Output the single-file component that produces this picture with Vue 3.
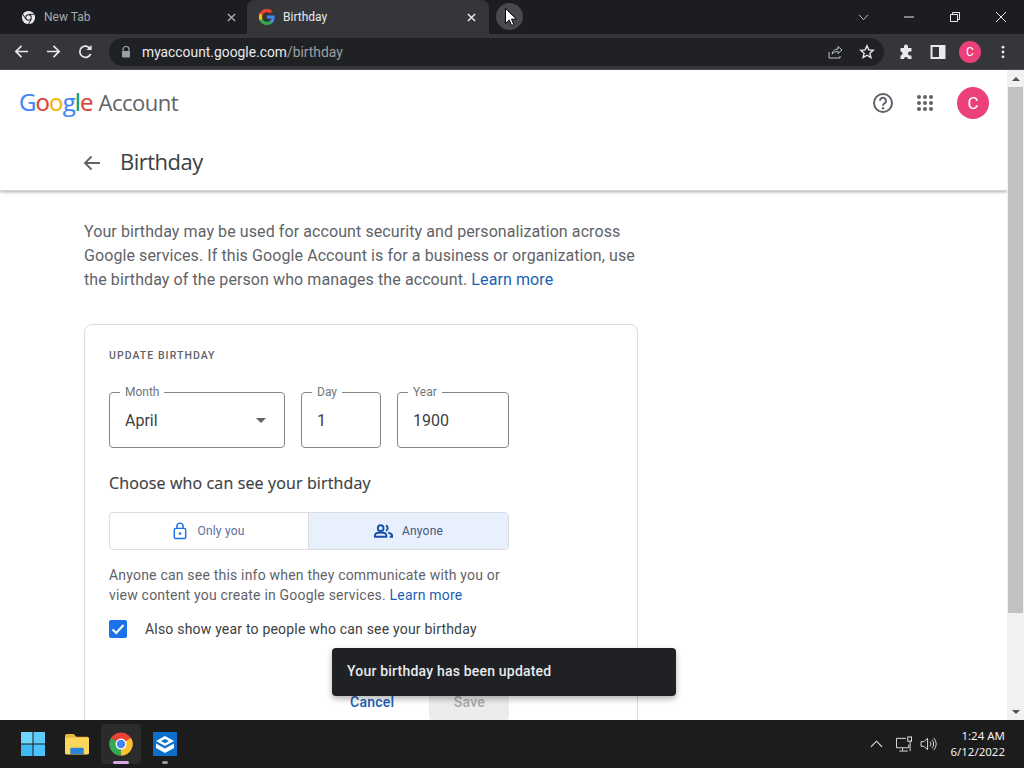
<script setup>
const tabs = [
  { title: 'New Tab', active: false },
  { title: 'Birthday', active: true }
]
const logo = [
  ['G', '#4285f4'], ['o', '#db4437'], ['o', '#f4b400'], ['g', '#4285f4'], ['l', '#0f9d58'], ['e', '#db4437']
]
</script>

<template>
  <div class="screen">
    <div class="tabstrip">
      <div v-for="t in tabs" :key="t.title" class="tab" :class="{ active: t.active }">
        <svg v-if="!t.active" class="fav" viewBox="0 0 16 16">
          <circle cx="8" cy="8" r="7" fill="#e8eaed" />
          <circle cx="8" cy="8" r="3.4" fill="#1c1d22" />
          <circle cx="8" cy="8" r="2.4" fill="#e8eaed" />
          <path d="M8 4.6h6M5 9.8 2 4.4M11 9.8l-3 5.2" stroke="#1c1d22" stroke-width="1" />
        </svg>
        <svg v-else class="fav" viewBox="0 0 16 16">
          <path d="M15.7 8.2c0-.6 0-1.100-.1-1.600H8v3h4.400a3.700 3.700 0 0 1-1.600 2.400v2h2.600c1.500-1.400 2.300-3.400 2.300-5.800z" fill="#4285f4" />
          <path d="M8 16c2.200 0 4-.7 5.400-2l-2.600-2c-.7.500-1.700.8-2.800.8-2.100 0-3.900-1.400-4.600-3.400H.7v2.100A8 8 0 0 0 8 16z" fill="#34a853" />
          <path d="M3.400 9.400a4.800 4.800 0 0 1 0-3V4.300H.7a8 8 0 0 0 0 7.200z" fill="#fbbc05" />
          <path d="M8 3.200c1.200 0 2.300.4 3.100 1.200l2.300-2.300A8 8 0 0 0 .7 4.300l2.700 2.100C4.100 4.500 5.900 3.200 8 3.200z" fill="#ea4335" />
        </svg>
        <span class="tab-title">{{ t.title }}</span>
        <svg class="tab-x" viewBox="0 0 10 10"><path d="M1 1l8 8M9 1 1 9" stroke="currentColor" stroke-width="1.600" /></svg>
      </div>
      <div class="newtab"><svg class="plus" viewBox="0 0 10 10"><path d="M5 1v8M1 5h8" stroke="#e8eaed" stroke-width="1.400" /></svg></div>
      <div class="winctrls">
        <svg class="chev" viewBox="0 0 12 8"><path d="M1 1l5 5.500L11 1" fill="none" stroke="#d0d2d6" stroke-width="1" /></svg>
        <svg class="wbtn" viewBox="0 0 12 12"><path d="M1 6h10" stroke="#e8eaed" stroke-width="1" /></svg>
        <svg class="wbtn" viewBox="0 0 12 12"><path d="M1.500 3.500h7v7h-7zM3.500 3.500v-2h7v7h-2" fill="none" stroke="#e8eaed" stroke-width="1" /></svg>
        <svg class="wbtn" viewBox="0 0 12 12"><path d="M1 1l10 10M11 1 1 11" stroke="#e8eaed" stroke-width="1" /></svg>
      </div>
    </div>

    <div class="toolbar">
      <svg class="tb" viewBox="0 0 16 16"><path d="M15 8H2M8 2 2 8l6 6" fill="none" stroke="#e8eaed" stroke-width="1.800" /></svg>
      <svg class="tb" viewBox="0 0 16 16"><path d="M1 8h13M8 2l6 6-6 6" fill="none" stroke="#e8eaed" stroke-width="1.800" /></svg>
      <svg class="tb" viewBox="0 0 16 16"><path d="M13.500 10.500A6 6 0 1 1 13 5" fill="none" stroke="#e8eaed" stroke-width="1.800" /><path d="M14.500 1v5.500H9z" fill="#e8eaed" /></svg>
      <div class="omnibox">
        <svg class="lock" viewBox="0 0 10 12"><path d="M2 5V3.500a3 3 0 0 1 6 0V5" fill="none" stroke="#9aa0a6" stroke-width="1.200" /><rect x="1" y="5" width="8" height="6.500" rx="1" fill="#9aa0a6" /></svg>
        <span class="url">myaccount.google.com<span class="url-dim">/birthday</span></span>
        <svg class="omni-ic share" viewBox="0 0 16 16"><path d="M2 8v6h11v-2M5 10c.5-3 3-5 6-5V2.500L15 6l-4 3.500V7.500c-2.500 0-4.500 1-6 2.500z" fill="none" stroke="#bdc1c6" stroke-width="1" /></svg>
        <svg class="omni-ic" viewBox="0 0 16 16"><path d="M8 1.800l1.800 4.100 4.400.4-3.300 2.900 1 4.300L8 11.200l-3.900 2.300 1-4.300-3.300-2.900 4.400-.4z" fill="none" stroke="#e8eaed" stroke-width="1.400" /></svg>
      </div>
      <svg class="tb2" viewBox="0 0 16 16"><path d="M6 2.500a2 2 0 0 1 4 0V4h3.500v3.500H12a2 2 0 0 0 0 4h1.500V15h-3.500a2 2 0 0 0-4 0H2.500v-3.500a2 2 0 0 0 0-4V4H6z" fill="#e8eaed" /></svg>
      <svg class="tb2" viewBox="0 0 16 16"><rect x="1.500" y="2" width="13" height="12" fill="none" stroke="#e8eaed" stroke-width="2" /><rect x="9" y="2" width="5.500" height="12" fill="#e8eaed" /></svg>
      <div class="mini-avatar">C</div>
      <svg class="tb3" viewBox="0 0 4 16"><circle cx="2" cy="2.500" r="1.600" fill="#e8eaed" /><circle cx="2" cy="8" r="1.600" fill="#e8eaed" /><circle cx="2" cy="13.500" r="1.600" fill="#e8eaed" /></svg>
    </div>

    <div class="viewport">
      <div class="page">
        <header class="header">
          <div class="topbar">
            <div class="brand">
              <span class="logo"><span v-for="(l, i) in logo" :key="i" :style="{ color: l[1] }">{{ l[0] }}</span></span>
              <span class="brand-word">Account</span>
            </div>
            <div class="top-actions">
              <svg class="help" viewBox="0 0 24 24"><circle cx="12" cy="12" r="9" fill="none" stroke="#5f6368" stroke-width="2" /><path d="M9 9.800a3 3 0 1 1 4.600 2.500c-1 .7-1.600 1.200-1.600 2.400" fill="none" stroke="#5f6368" stroke-width="2" /><circle cx="12" cy="17.300" r="1.200" fill="#5f6368" /></svg>
              <svg class="apps" viewBox="0 0 16 16">
                <g fill="#5f6368">
                  <circle cx="2" cy="2" r="2" /><circle cx="8" cy="2" r="2" /><circle cx="14" cy="2" r="2" />
                  <circle cx="2" cy="8" r="2" /><circle cx="8" cy="8" r="2" /><circle cx="14" cy="8" r="2" />
                  <circle cx="2" cy="14" r="2" /><circle cx="8" cy="14" r="2" /><circle cx="14" cy="14" r="2" />
                </g>
              </svg>
              <div class="avatar">C</div>
            </div>
          </div>
          <div class="titlebar">
            <svg class="back" viewBox="0 0 18 16"><path d="M17 8H2M8.500 1.500 2 8l6.500 6.500" fill="none" stroke="#5f6368" stroke-width="1.800" /></svg>
            <h1 class="title">Birthday</h1>
          </div>
        </header>

        <main class="content">
          <p class="intro">Your birthday may be used for account security and personalization across Google services. If this Google Account is for a business or organization, use the birthday of the person who manages the account. <a class="link">Learn more</a></p>

          <section class="card">
            <div class="card-label">UPDATE BIRTHDAY</div>
            <div class="fields">
              <div class="field f-month"><span class="legend">Month</span><span class="value">April</span><span class="caret"></span></div>
              <div class="field f-day"><span class="legend">Day</span><span class="value">1</span></div>
              <div class="field f-year"><span class="legend">Year</span><span class="value">1900</span></div>
            </div>
            <h2 class="choose">Choose who can see your birthday</h2>
            <div class="toggle">
              <div class="seg off">
                <svg class="seg-ic" viewBox="0 0 16 20"><path d="M4.500 7V4.500a3.500 3.500 0 0 1 7 0V7" fill="none" stroke="#1a73e8" stroke-width="1.700" /><rect x="1.500" y="7" width="13" height="11.500" rx="1.500" fill="none" stroke="#1a73e8" stroke-width="1.700" /><circle cx="8" cy="12.800" r="1.500" fill="#1a73e8" /></svg>
                <span>Only you</span>
              </div>
              <div class="seg on">
                <svg class="seg-ic wide" viewBox="0 0 20 14"><circle cx="7" cy="4" r="3" fill="none" stroke="#174ea6" stroke-width="2" /><path d="M1 13v-1.500C1 9.500 4 8.500 7 8.500s6 1 6 3V13z" fill="none" stroke="#174ea6" stroke-width="2" /><path d="M12.500 1.200a3 3 0 0 1 0 5.600M15 8.800c2 .6 4 1.400 4 3V13h-2.500" fill="none" stroke="#174ea6" stroke-width="2" /></svg>
                <span>Anyone</span>
              </div>
            </div>
            <p class="note">Anyone can see this info when they communicate with you or view content you create in Google services. <a class="link">Learn more</a></p>
            <div class="check-row">
              <svg class="check" viewBox="0 0 18 18"><rect width="18" height="18" rx="2" fill="#1a73e8" /><path d="M3.500 9.500l3.700 3.500 7.300-8" fill="none" stroke="#fff" stroke-width="2" /></svg>
              <span>Also show year to people who can see your birthday</span>
            </div>
            <div class="actions">
              <span class="cancel">Cancel</span>
              <span class="save">Save</span>
            </div>
          </section>
        </main>
      </div>
      <div class="scrollbar">
        <div class="sb-btn"><span class="up"></span></div>
        <div class="sb-thumb"></div>
        <div class="sb-track"></div>
        <div class="sb-btn"><span class="down"></span></div>
      </div>
      <div class="toast">Your birthday has been updated</div>
    </div>

    <footer class="taskbar">
      <div class="task-left">
        <div class="task-item">
          <svg class="start" viewBox="0 0 24 24"><g fill="#4cc2ff"><rect x="0" y="0" width="11.500" height="11.500" fill="#6fd6fb" /><rect x="12.500" y="0" width="11.500" height="11.500" fill="#5ccdf8" /><rect x="0" y="12.500" width="11.500" height="11.500" fill="#3fb9f2" /><rect x="12.500" y="12.500" width="11.500" height="11.500" /></g></svg>
        </div>
        <div class="task-item">
          <svg class="tico" viewBox="0 0 25 22"><path d="M0 2.500A2 2 0 0 1 2 .5h7l3 3h11a2 2 0 0 1 2 2v14a2 2 0 0 1-2 2H2a2 2 0 0 1-2-2z" fill="#e7b93c" /><rect x="0" y="4.500" width="25" height="17.500" rx="1.500" fill="#fbd75c" /><path d="M5.500 21.500v-5a1.500 1.500 0 0 1 1.500-1.500h11a1.500 1.500 0 0 1 1.500 1.500v5z" fill="#2a84d8" /></svg>
        </div>
        <div class="task-item chrome-item">
          <svg class="tico" viewBox="0 0 24 24">
            <circle cx="12" cy="12" r="11.500" fill="#ea4335" />
            <path d="M12 12 22 6a11.500 11.500 0 0 1-10 17.500z" fill="#fbc02d" />
            <path d="M12 12 12 23.500A11.500 11.500 0 0 1 2 6z" fill="#34a853" />
            <circle cx="12" cy="12" r="5.500" fill="#fff" />
            <circle cx="12" cy="12" r="4.200" fill="#4285f4" />
          </svg>
          <span class="run pink"></span>
        </div>
        <div class="task-item">
          <svg class="tico box" viewBox="0 0 24 24"><rect width="24" height="24" fill="#0a6fc8" /><path d="M12 4 21 9l-9 5-9-5z" fill="#fff" /><path d="M12 7 16 9l-4 2.200L8 9z" fill="#0a6fc8" /><path d="M3 11.500l9 5 9-5v4.500l-9 5-9-5z" fill="#fff" /></svg>
          <span class="run grey"></span>
        </div>
      </div>
      <div class="tray">
        <svg class="tray-chev" viewBox="0 0 14 8"><path d="M1 7l6-6 6 6" fill="none" stroke="#e8e8e8" stroke-width="1.200" /></svg>
        <svg class="tray-net" viewBox="0 0 18 17"><path d="M11 2.500H1v10h13V9M7.500 12.500v3M4 16h9M15.500 5v11" fill="none" stroke="#e8e8e8" stroke-width="1" /><rect x="13" y="1" width="4" height="4.500" fill="none" stroke="#e8e8e8" stroke-width="1" /></svg>
        <svg class="tray-vol" viewBox="0 0 18 15"><path d="M1 5v5h3l4 3.500V1.500L4 5zM10.500 5a3.500 3.500 0 0 1 0 5M12.500 3a6 6 0 0 1 0 9M14.500 1a9 9 0 0 1 0 13" fill="none" stroke="#e8e8e8" stroke-width="1" /></svg>
        <div class="clock"><div>1:24 AM</div><div>6/12/2022</div></div>
      </div>
    </footer>

    <svg class="cursor" viewBox="0 0 12 18"><path d="M.5.500v15l3.700-3.400 2.400 5.400 2.300-1-2.400-5.300h5z" fill="#fff" stroke="#000" stroke-width="1" /></svg>
  </div>
</template>

<style>
html, body { margin: 0; padding: 0; overflow: hidden; }
</style>

<style scoped>
.screen { position: relative; width: 1024px; height: 768px; overflow: hidden; display: flex; flex-direction: column; font-family: Roboto, "Liberation Sans", sans-serif; background: #fff; }

.tabstrip { height: 34px; flex: none; background: #1c1d22; display: flex; align-items: stretch; padding-left: 8px; box-sizing: border-box; }
.tab { width: 239px; box-sizing: border-box; display: flex; align-items: center; padding: 0 9px 0 13px; color: #a9abaf; font-size: 12px; }
.tab.active { background: #35363a; color: #e8eaed; border-radius: 8px 8px 0 0; width: 242px; padding: 0 11px 0 12px; }
.fav { width: 15px; height: 15px; flex: none; margin-right: 8px; }
.tab.active .fav { width: 16px; height: 16px; }
.tab-title { flex: 1; }
.tab-x { width: 9px; height: 9px; flex: none; margin-right: 2px; }
.newtab { width: 27px; height: 27px; border-radius: 50%; background: #48494d; margin: 3px 0 0 7px; display: flex; align-items: center; justify-content: center; }
.plus { width: 10px; height: 10px; }
.winctrls { margin-left: auto; display: flex; align-items: center; }
.chev { width: 11px; height: 7px; margin-right: 34px; }
.wbtn { width: 12px; height: 12px; margin-right: 34px; }
.wbtn:last-child { margin-right: 17px; }

.toolbar { height: 36px; flex: none; background: #35363a; border-bottom: 1px solid #4a4b4f; display: flex; align-items: center; box-sizing: border-box; padding-left: 14px; }
.tb { width: 15px; height: 15px; margin-right: 17px; flex: none; }
.omnibox { width: 775px; height: 28px; margin-left: -1px; background: #202124; border-radius: 14px; display: flex; align-items: center; box-sizing: border-box; padding: 0 9px 0 12px; }
.lock { width: 10px; height: 12px; margin-right: 11px; flex: none; }
.url { color: #e8eaed; font-size: 13.850px; flex: 1; }
.url-dim { color: #9aa0a6; }
.omni-ic { width: 16px; height: 16px; flex: none; }
.share { margin-right: 16px; }
.tb2 { width: 16px; height: 16px; flex: none; margin-left: 15px; }
.tb2 + .tb2 { margin-left: 16px; }
.omnibox + .tb2 { margin-left: 14px; }
.mini-avatar { width: 22px; height: 22px; border-radius: 50%; background: #ec407a; color: #fff; font-size: 12px; display: flex; align-items: center; justify-content: center; margin-left: 13px; flex: none; }
.tb3 { width: 4px; height: 14px; margin-left: 20px; flex: none; }

.viewport { position: relative; flex: 1; min-height: 0; display: flex; overflow: hidden; }
.page { flex: 1; min-width: 0; overflow: hidden; }
.header { height: 121px; box-sizing: border-box; box-shadow: 0 1px 3px rgba(60, 64, 67, .45); border-bottom: 1px solid #d5d6d8; position: relative; }
.topbar { height: 65px; display: flex; align-items: center; justify-content: space-between; padding: 0 18px 0 19px; box-sizing: border-box; }
.brand { display: flex; align-items: baseline; margin-top: -2px; }
.logo { font-family: "Open Sans", sans-serif; font-size: 24px; letter-spacing: -.9px; margin-right: 6px; -webkit-text-stroke: .2px; }
.brand-word { font-size: 22px; color: #5f6368; font-family: "Open Sans", sans-serif; letter-spacing: -.5px; }
.top-actions { display: flex; align-items: center; }
.help { width: 24px; height: 24px; }
.apps { width: 16px; height: 16px; margin-left: 22px; }
.avatar { width: 32px; height: 32px; border-radius: 50%; background: #ec407a; color: #fff; font-size: 17px; display: flex; align-items: center; justify-content: center; margin-left: 24px; }
.titlebar { display: flex; align-items: center; padding-left: 84px; height: 56px; margin-top: -1px; }
.back { width: 18px; height: 16px; margin: 1px 0 0 -1px; }
.title { margin: -3px 0 0 19px; font-weight: 400; font-size: 22px; color: #3c4043; font-family: "Open Sans", sans-serif; letter-spacing: -.5px; }

.content { padding: 29px 0 0 84px; width: 554px; box-sizing: content-box; }
.intro { margin: 0; font-size: 16px; line-height: 24px; color: #5f6368; letter-spacing: .09px; }
.link { color: #1a5fb4; }
.card { margin-top: 32px; width: 554px; box-sizing: border-box; height: 420px; border: 1px solid #dadce0; border-radius: 8px; padding: 24px 24px 0; }
.card-label { font-size: 10.500px; line-height: 14px; font-weight: 500; letter-spacing: 1.050px; color: #5f6368; }
.fields { display: flex; gap: 16px; margin-top: 29px; }
.field { position: relative; height: 56px; box-sizing: border-box; border: 1px solid #80868b; border-radius: 4px; display: flex; align-items: center; padding: 0 15px; font-size: 16px; color: #3c4043; }
.f-month { width: 176px; }
.f-day { width: 80px; }
.f-year { width: 112px; }
.legend { position: absolute; top: -8px; left: 10px; background: #fff; padding: 0 5px; font-size: 12px; line-height: 14px; color: #70757a; }
.caret { position: absolute; right: 18px; top: 25px; border: 5px solid transparent; border-top-color: #5f6368; border-bottom: 0; }
.choose { margin: 25px 0 0; font-weight: 500; font-size: 16px; line-height: 20px; color: #3c4043; font-family: "Open Sans", sans-serif; letter-spacing: .15px; -webkit-text-stroke: .2px #3c4043; }
.toggle { display: flex; width: 400px; height: 38px; margin-top: 19px; border: 1px solid #dadce0; border-radius: 4px; box-sizing: border-box; overflow: hidden; }
.seg { display: flex; align-items: center; justify-content: center; gap: 10px; font-size: 12px; letter-spacing: .2px; color: #5b6f9e; box-sizing: border-box; }
.seg.off { width: 198px; }
.seg.on { width: 200px; background: #e8f0fe; color: #44567f; border-left: 1px solid #dadce0; gap: 9px; }
.seg-ic { width: 14px; height: 18px; }
.seg-ic.wide { width: 19px; height: 14px; }
.note { margin: 15px 0 0; width: 400px; font-size: 14px; line-height: 20px; color: #5f6368; letter-spacing: .2px; }
.check-row { display: flex; align-items: center; margin-top: 15px; font-size: 14px; color: #3c4043; letter-spacing: .2px; }
.check { width: 18px; height: 18px; margin-right: 18px; }
.actions { display: flex; align-items: center; margin-top: 46px; padding-left: 241px; font-size: 14px; font-weight: 500; height: 36px; letter-spacing: .25px; }
.cancel { color: #1a5fb4; margin-right: 35px; }
.save { background: #ececec; color: #a8a8a8; width: 80px; height: 36px; display: flex; align-items: center; justify-content: center; border-radius: 4px; }

.scrollbar { width: 17px; flex: none; background: #f1f1f1; display: flex; flex-direction: column; }
.sb-btn { height: 17px; display: flex; align-items: center; justify-content: center; flex: none; }
.up { border: 4px solid transparent; border-bottom-color: #505050; border-top: 0; }
.down { border: 4px solid transparent; border-top-color: #505050; border-bottom: 0; }
.sb-thumb { height: 526px; background: #c1c1c1; flex: none; margin: 0 1px; }
.sb-track { flex: 1; }

.toast { position: absolute; left: 332px; top: 578px; width: 344px; height: 48px; box-sizing: border-box; background: #202124; color: #e8eaed; border-radius: 4px; padding: 0 15px 2px; display: flex; align-items: center; font-size: 14px; font-weight: 500; letter-spacing: .2px; box-shadow: 0 3px 6px rgba(0, 0, 0, .3); }

.taskbar { height: 48px; flex: none; background: #1c1c1c; display: flex; align-items: center; justify-content: space-between; }
.task-left { display: flex; padding-left: 13px; }
.task-item { position: relative; width: 40px; height: 40px; display: flex; align-items: center; justify-content: center; margin-right: 4px; border-radius: 4px; }
.chrome-item { background: #2b2b2b; }
.start { width: 24px; height: 24px; }
.tico { width: 24px; height: 24px; }
.run { position: absolute; bottom: 0; left: 50%; transform: translateX(-50%); height: 3px; border-radius: 2px; }
.pink { width: 16px; background: #d9a6e6; }
.grey { width: 6px; background: #9a9a9a; }
.tray { display: flex; align-items: center; color: #f0f0f0; }
.tray-chev { width: 13px; height: 8px; margin-right: 12px; }
.tray-net { width: 18px; height: 16px; margin-right: 7px; }
.tray-vol { width: 17px; height: 14px; margin-right: 13px; }
.clock { text-align: right; font-family: "Noto Sans", sans-serif; font-size: 11.500px; line-height: 16px; margin-right: 19px; }

.cursor { position: absolute; left: 505px; top: 8px; width: 12px; height: 18px; }
</style>
